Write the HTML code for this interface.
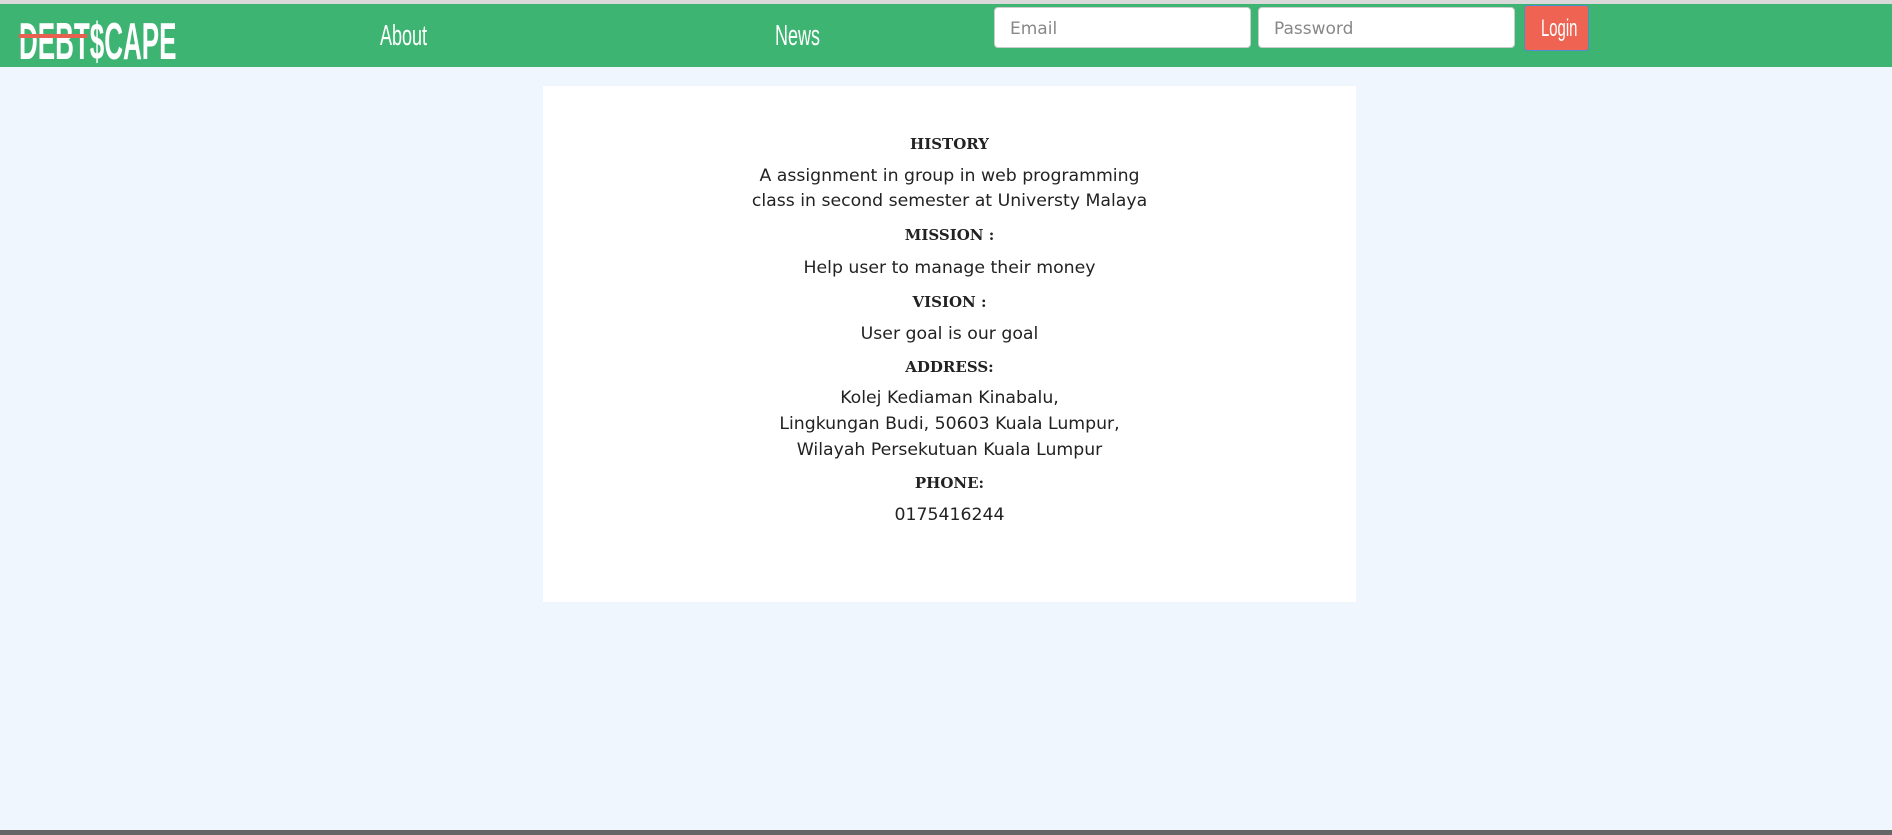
<!DOCTYPE html>
<html><head><meta charset="utf-8"><style>
html,body{margin:0;padding:0;width:1892px;height:835px;overflow:hidden;background:#eff6fe;position:relative}
.top{position:absolute;left:0;top:0;width:1892px;height:4px;background:#d9d9d9}
nav{position:absolute;left:0;top:4px;width:1892px;height:63px;background:#3db471}
.cond{position:absolute;font-family:"Liberation Sans Narrow","Liberation Sans",sans-serif;color:#fff;transform-origin:0 0;white-space:nowrap}
.inp{position:absolute;top:7px;height:41px;background:#fff;border:1px solid #ccc;border-radius:4px;box-sizing:border-box;font-family:"DejaVu Sans",sans-serif;font-size:17px;color:#888;padding:11px 15px}
.btn{position:absolute;left:1524px;top:5px;width:65px;height:46px;background:#ee6352;border:1px solid #4a8fd0;box-sizing:border-box;border-radius:3px}
.card{position:absolute;left:543px;top:86px;width:813px;height:516px;background:#fff}
.t{position:absolute;left:543px;width:813px;text-align:center;font-family:"DejaVu Sans",Verdana,sans-serif;font-size:17.3px;color:#222;line-height:22px}
.h{position:absolute;left:543px;width:813px;text-align:center;font-family:"DejaVu Serif",serif;font-weight:bold;font-size:15px;color:#222;line-height:18px}
.bot{position:absolute;left:0;top:830px;width:1892px;height:5px;background:#666}
</style></head><body>
<div class="top"></div>
<nav></nav>
<div class="cond" style="left:19px;top:12px;font-size:52px;font-weight:bold;transform:scaleX(0.5)">DEBT$CAPE</div>
<div style="position:absolute;left:19px;top:34px;width:68px;height:4px;background:#e8604f"></div>
<div class="cond" style="left:380px;top:20px;font-size:29px;transform:scaleX(0.62)">About</div>
<div class="cond" style="left:775px;top:20px;font-size:29px;transform:scaleX(0.62)">News</div>
<div class="inp" style="left:994px;width:257px">Email</div>
<div class="inp" style="left:1258px;width:257px">Password</div>
<div class="btn"></div>
<div class="cond" style="left:1541px;top:15px;font-size:24px;transform:scaleX(0.62)">Login</div>
<div class="card"></div>
<div class="h" style="top:135px">HISTORY</div>
<div class="t" style="top:165px">A assignment in group in web programming</div>
<div class="t" style="top:190px">class in second semester at Universty Malaya</div>
<div class="h" style="top:226px">MISSION :</div>
<div class="t" style="top:257px">Help user to manage their money</div>
<div class="h" style="top:293px">VISION :</div>
<div class="t" style="top:323px">User goal is our goal</div>
<div class="h" style="top:358px">ADDRESS:</div>
<div class="t" style="top:387px">Kolej Kediaman Kinabalu,</div>
<div class="t" style="top:413px">Lingkungan Budi, 50603 Kuala Lumpur,</div>
<div class="t" style="top:439px">Wilayah Persekutuan Kuala Lumpur</div>
<div class="h" style="top:474px">PHONE:</div>
<div class="t" style="top:504px">0175416244</div>
<div class="bot"></div>
</body></html>
